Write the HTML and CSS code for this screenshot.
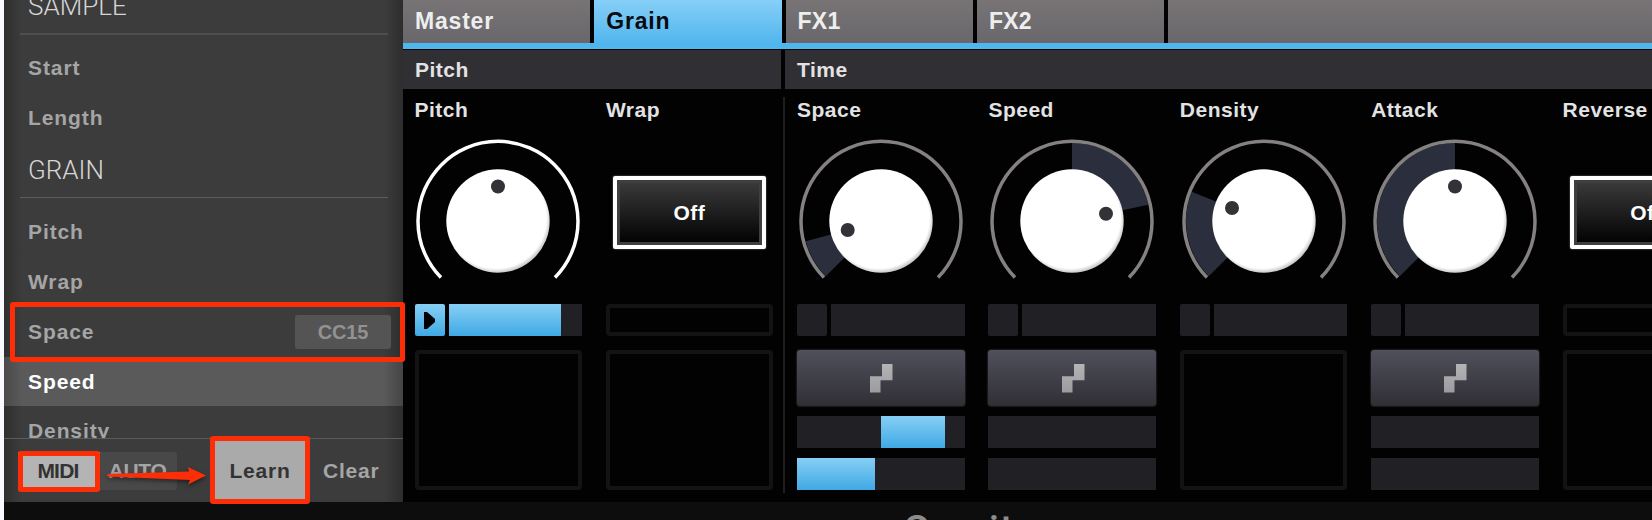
FILE: index.html
```
<!DOCTYPE html>
<html lang="en">
<head>
  <meta charset="utf-8">
  <meta name="viewport" content="width=device-width,initial-scale=1.0">
  <title>Granular Synth</title>
  <link rel="stylesheet" href="styles.css">
</head>
<body>
  <!-- Shared shapes -->
  <svg class="defs">
    <defs>
      <radialGradient id="cap" cx="0.48" cy="0.47" r="0.53">
        <stop offset="0.92" stop-color="#fff"/>
        <stop offset="1" stop-color="#c8c8c8"/>
      </radialGradient>
      <linearGradient id="step" x1="0" y1="0" x2="0" y2="1">
        <stop offset="0" stop-color="#b4b4b6"/>
        <stop offset="1" stop-color="#9c9c9f"/>
      </linearGradient>
      <path id="ring" d="M-57 56.5A80 80 0 1 1 57 56.5"/>
      <path id="steps" d="M12 0h10.500v16.300H10.500V28.500H0V12.300H12z"/>
    </defs>
  </svg>

  <div class="app">
    <!-- Parameter list -->
    <aside class="sidebar">
      <div class="params">
        <h2 class="group">SAMPLE</h2>
        <div class="param">Start</div>
        <div class="param">Length</div>
        <h2 class="group">GRAIN</h2>
        <div class="param">Pitch</div>
        <div class="param">Wrap</div>
        <div class="param">Space <span class="cc">CC15</span></div>
        <div class="param selected">Speed</div>
        <div class="param">Density</div>
      </div>
      <div class="actions">
        <div class="mode">
          <span class="mode-item on">MIDI</span>
          <span class="mode-item">AUTO</span>
        </div>
        <span class="learn">Learn</span>
        <span class="clear">Clear</span>
      </div>
    </aside>

    <!-- Synth panel -->
    <main class="synth">
      <nav class="tabs">
        <span class="tab">Master</span>
        <span class="tab active">Grain</span>
        <span class="tab fx">FX1</span>
        <span class="tab fx">FX2</span>
        <span class="tab rest"></span>
      </nav>
      <div class="sections">
        <section class="section">
          <h3 class="section-title">Pitch</h3>
          <div class="controls">
            <div class="control">
              <span class="label">Pitch</span>
              <svg class="knob bright" viewBox="-84 -84 168 168">
                <use href="#ring"/>
                <circle class="cap" r="51.700"/>
                <circle class="dot" cx="0" cy="-34.500" r="7"/>
              </svg>
              <div class="mod">
                <span class="mod-toggle on"><svg width="11" height="17" viewBox="0 0 11 17"><path d="M0 0H3L11 7V10L3 17H0z"/></svg></span>
                <span class="bar"><span class="fill" style="width: 112px"></span></span>
              </div>
              <div class="slot"></div>
            </div>
            <div class="control">
              <span class="label">Wrap</span>
              <div class="switch">Off</div>
              <div class="mod empty"></div>
              <div class="slot"></div>
            </div>
          </div>
        </section>

        <section class="section time">
          <h3 class="section-title">Time</h3>
          <div class="controls">
            <div class="control">
              <span class="label">Space</span>
              <svg class="knob" viewBox="-84 -84 168 168">
                <path class="range" d="M0 0L-55.200 55.200A78 78 0 0 1 -75.300 20.200z"/>
                <use href="#ring"/>
                <circle class="cap" r="51.700"/>
                <circle class="dot" cx="-33.300" cy="9" r="7"/>
              </svg>
              <div class="mod"><span class="mod-toggle"></span><span class="bar"></span></div>
              <div class="seq">
                <div class="seq-button"><svg width="23" height="29"><use href="#steps"/></svg></div>
                <div class="bar"><span class="fill" style="margin-left: 84px; width: 64px"></span></div>
                <div class="bar"><span class="fill" style="width: 78px"></span></div>
              </div>
            </div>
            <div class="control">
              <span class="label">Speed</span>
              <svg class="knob" viewBox="-84 -84 168 168">
                <path class="range" d="M0 0V-78A78 78 0 0 1 76.300 -16.200z"/>
                <use href="#ring"/>
                <circle class="cap" r="51.700"/>
                <circle class="dot" cx="34" cy="-7.300" r="7"/>
              </svg>
              <div class="mod"><span class="mod-toggle"></span><span class="bar"></span></div>
              <div class="seq">
                <div class="seq-button"><svg width="23" height="29"><use href="#steps"/></svg></div>
                <div class="bar"></div>
                <div class="bar"></div>
              </div>
            </div>
            <div class="control">
              <span class="label">Density</span>
              <svg class="knob" viewBox="-84 -84 168 168">
                <path class="range" d="M0 0L-55.200 55.200A78 78 0 0 1 -72.300 -29.200z"/>
                <use href="#ring"/>
                <circle class="cap" r="51.700"/>
                <circle class="dot" cx="-32" cy="-13" r="7"/>
              </svg>
              <div class="mod"><span class="mod-toggle"></span><span class="bar"></span></div>
              <div class="slot"></div>
            </div>
            <div class="control">
              <span class="label">Attack</span>
              <svg class="knob" viewBox="-84 -84 168 168">
                <path class="range" d="M0 0L-55.200 55.200A78 78 0 0 1 0 -78z"/>
                <use href="#ring"/>
                <circle class="cap" r="51.700"/>
                <circle class="dot" cx="0" cy="-34.500" r="7"/>
              </svg>
              <div class="mod"><span class="mod-toggle"></span><span class="bar"></span></div>
              <div class="seq">
                <div class="seq-button"><svg width="23" height="29"><use href="#steps"/></svg></div>
                <div class="bar"></div>
                <div class="bar"></div>
              </div>
            </div>
            <div class="control">
              <span class="label">Reverse</span>
              <div class="switch">Off</div>
              <div class="mod empty"></div>
              <div class="slot"></div>
            </div>
          </div>
        </section>
      </div>
    </main>
  </div>

  <footer class="brand">Gravity</footer>

  <!-- Callouts -->
  <div class="callout callout-space"></div>
  <div class="callout callout-midi"></div>
  <div class="callout callout-learn"></div>
  <svg class="arrow" width="110" height="30" viewBox="0 0 110 30">
    <path d="M4 12L85 9.500L84 5L102 13.500L84 22.500L86 18L4 14.500Q2 13 4 12z"/>
  </svg>
</body>
</html>
```
FILE: styles.css
```
* {
  box-sizing: border-box;
}

html, body {
  margin: 0;
  height: 100%;
  overflow: hidden;
}

body {
  position: relative;
  padding-left: 4px;
  background: #f9faff;
  font-family: "Liberation Sans", Arial, sans-serif;
  font-weight: bold;
  font-size: 21px;
  letter-spacing: 0.5px;
}

.defs {
  position: absolute;
  width: 0;
  height: 0;
}

.app {
  display: flex;
  height: 502px;
  background: #020203;
}

/* Sidebar */
.sidebar {
  flex: none;
  display: flex;
  flex-direction: column;
  width: 399px;
  color: #a5a5a5;
  background: linear-gradient(90deg, #2f2f2f, #3c3c3c 18px, #3c3c3c 380px, #2d2d2d);
}

.params {
  height: 438px;
  overflow: hidden;
}

.group {
  height: 55px;
  margin: 0 15px 9px 16px;
  padding-left: 8px;
  border-bottom: 1px solid #5b5b5b;
  color: #d6d6d6;
  font: 300 26px/55px Roboto, sans-serif;
  letter-spacing: 0;
}

.group:first-child {
  height: 56px;
  margin-top: -21px;
  margin-bottom: 8px;
  border-bottom: 2px solid #4e4e4e;
}

.param {
  display: flex;
  align-items: center;
  justify-content: space-between;
  height: 50px;
  padding: 0 12px 1px 24px;
  letter-spacing: 0.9px;
}

.selected {
  height: 49px;
  padding-bottom: 0;
  color: #fff;
  background: linear-gradient(90deg, #4a4a4a, #5a5a5a 18px, #5a5a5a 380px, #444);
}

.cc {
  width: 96px;
  height: 34px;
  border-radius: 3px;
  background: #545454;
  color: #929292;
  font-size: 20px;
  line-height: 34px;
  text-align: center;
  letter-spacing: -0.100px;
}

.actions {
  display: flex;
  align-items: center;
  height: 64px;
  border-top: 1px solid #5b5b5b;
  letter-spacing: 0.8px;
}

.mode {
  display: flex;
  width: 159px;
  height: 38px;
  margin-left: 14px;
  border-radius: 3px;
  background: #484848;
  line-height: 38px;
  text-align: center;
  letter-spacing: -0.300px;
}

.mode-item {
  width: 75px;
}

.mode-item.on {
  width: 82px;
  padding-right: 2px;
  background: #b4b4b4;
  color: #333;
  letter-spacing: -0.800px;
}

.learn {
  width: 92px;
  height: 60px;
  margin-left: 37px;
  background: #aaa;
  color: #333;
  line-height: 60px;
  text-align: center;
}

.clear {
  margin-left: 17px;
}

/* Tabs */
.synth {
  flex: 1;
  min-width: 0;
  overflow: hidden;
}

.tabs {
  display: flex;
  gap: 4px;
  height: 49px;
  border-bottom: 6px solid #52b6ee;
}

.tab {
  flex: none;
  width: 187.300px;
  padding-left: 12px;
  background: linear-gradient(#787476, #68676b);
  color: #eee;
  font-size: 23px;
  line-height: 42px;
  letter-spacing: 0.8px;
}

.tab.fx {
  letter-spacing: 0.2px;
}

.tab.active {
  background: linear-gradient(#86cff7, #52b6ee);
  color: #0a0a10;
}

.tab.rest {
  flex: 1;
}

/* Sections */
.sections {
  display: flex;
  color: #e3e3e3;
}

.section {
  flex: none;
  width: 382px;
}

.section.time {
  width: 960px;
}

.section-title {
  height: 39px;
  margin: 1px 4px 0 0;
  padding-left: 12px;
  background: #302f34;
  font-size: 21px;
  line-height: 39px;
}

.controls {
  display: flex;
  gap: 23.900px;
  height: 396px;
  margin-top: 8px;
  padding-left: 12px;
}

.section:first-child .controls {
  padding-left: 11.500px;
  border-right: 2px solid #1e1e1f;
}

.control {
  flex: none;
  width: 167.500px;
}

.label {
  display: block;
  height: 40px;
  padding-top: 1px;
  line-height: 24px;
}

.knob {
  display: block;
  width: 168px;
  height: 168px;
  margin-bottom: -1px;
  fill: none;
  stroke: #858180;
  stroke-width: 3.500px;
}

.knob.bright {
  margin-left: -0.500px;
  stroke: #fff;
}

.cap {
  fill: url(#cap);
  stroke: none;
}

.dot {
  fill: #333236;
  stroke: none;
}

.range {
  fill: #2b2f3d;
  stroke: none;
}

.switch {
  width: 153px;
  height: 73px;
  margin: 39px 0 55px 7px;
  border: 4px solid #fff;
  border-radius: 2px;
  background: linear-gradient(#3c3c3c, #000);
  box-shadow: inset 0 0 0 3px #3f3f3f, 0 0 2px #777;
  color: #fff;
  line-height: 66px;
  text-align: center;
}

.mod {
  display: flex;
  gap: 4px;
  height: 32px;
  margin-bottom: 14px;
}

.mod .bar {
  flex: 1;
}

.mod-toggle {
  display: flex;
  align-items: center;
  justify-content: center;
  width: 30px;
  border-radius: 2px;
  background: #212025;
}

.mod-toggle.on,
.fill {
  background: linear-gradient(#86cff5, #40a9e5);
}

.mod.empty,
.slot {
  border: 4px solid #131315;
  border-radius: 4px;
}

.slot {
  height: 140px;
}

.bar {
  height: 32px;
  background: #212025;
}

.fill {
  display: block;
  height: 100%;
}

.seq {
  display: flex;
  flex-direction: column;
  gap: 10px;
}

.seq-button {
  display: flex;
  align-items: center;
  justify-content: center;
  height: 56px;
  padding-left: 2px;
  border-radius: 3px;
  background: linear-gradient(#50505b, #302f35);
  box-shadow: 0 0 2px #55555c;
}

.seq-button svg {
  fill: url(#step);
}

/* Bottom strip, brand name is cut by the window edge */
.brand {
  height: 18px;
  padding-left: 899px;
  overflow: hidden;
  background: #0d0d0d;
  color: #8c8c8c;
  font: 500 40px/58px Roboto, sans-serif;
  letter-spacing: 1px;
}

/* Callouts */
.callout {
  position: absolute;
  border: 5px solid #fb2e07;
  border-radius: 3px;
}

.callout-space {
  left: 10px;
  top: 302px;
  width: 395px;
  height: 60px;
}

.callout-midi {
  left: 18px;
  top: 451px;
  width: 82px;
  height: 41px;
}

.callout-learn {
  left: 210px;
  top: 436px;
  width: 100px;
  height: 68px;
}

.arrow {
  position: absolute;
  left: 104px;
  top: 462px;
  fill: #fb2e07;
  filter: drop-shadow(0 2px 2px rgba(0, 0, 0, 0.5));
}
```
